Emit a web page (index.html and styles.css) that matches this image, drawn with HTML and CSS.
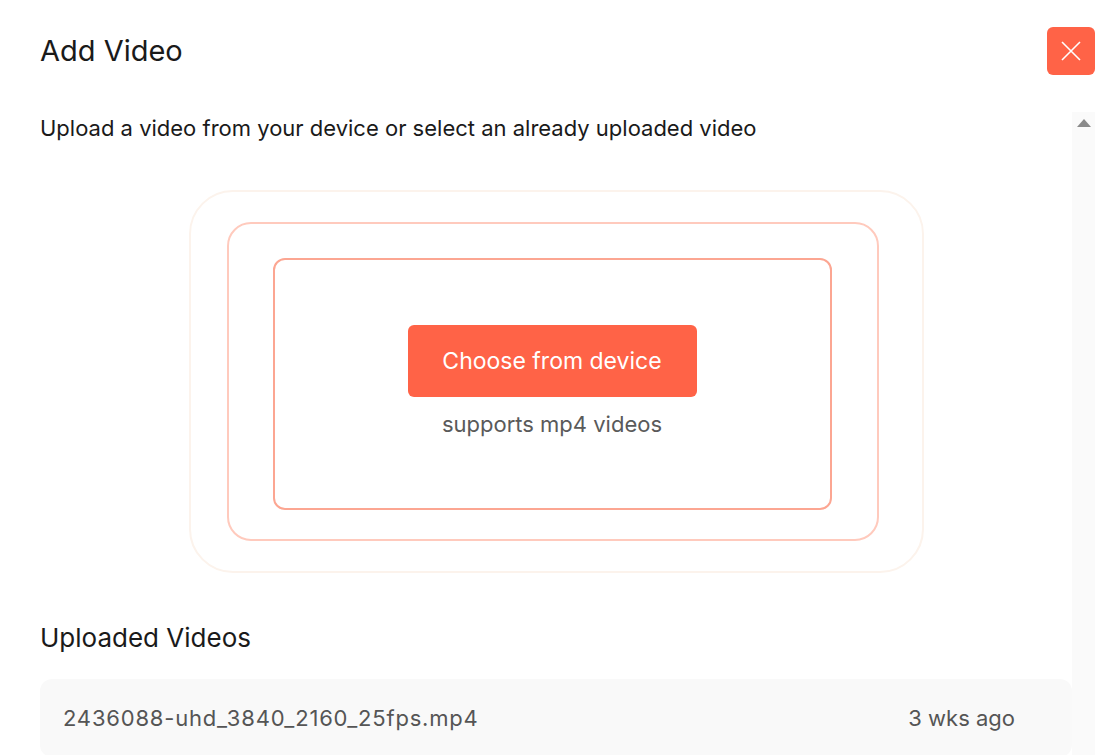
FILE: index.html
```html
<!DOCTYPE html>
<html lang="en">

<head>
    <meta charset="UTF-8">
    <title>Add Video</title>
    <link rel="stylesheet" href="styles.css">
</head>

<body>
    <div class="modal">
        <!-- header -->
        <div class="modal-head">
            <h1 class="modal-title">Add Video</h1>
            <button class="close-btn" aria-label="Close">
                <svg width="22" height="22" viewBox="0 0 22 22">
                    <path d="M2 2 L20 20 M20 2 L2 20" stroke="#fff" stroke-width="1.6" fill="none"/>
                </svg>
            </button>
        </div>

        <!-- body -->
        <div class="modal-body">
            <div class="content">
                <p class="lead">Upload a video from your device or select an already uploaded video</p>

                <div class="drop-outer">
                    <div class="drop-middle">
                        <div class="drop-inner">
                            <button class="choose-btn">Choose from device</button>
                            <span class="hint">supports mp4 videos</span>
                        </div>
                    </div>
                </div>

                <h2 class="section-title">Uploaded Videos</h2>
                <ul class="video-list">
                    <li class="video-item">
                        <span class="video-name">2436088-uhd_3840_2160_25fps.mp4</span>
                        <span class="video-date">3 wks ago</span>
                    </li>
                </ul>
            </div>
            <!-- scrollbar -->
            <div class="scrollbar">
                <span class="scroll-up"></span>
            </div>
        </div>
    </div>
</body>

</html>
```

FILE: styles.css
```css
* {
    margin: 0;
    padding: 0;
    box-sizing: border-box;
    list-style: none;
}

body {
    background-color: #fff;
    font-family: "Inter", "Noto Sans", sans-serif;
    color: #1a1a1a;
    height: 755px;
    overflow: hidden;
}

.modal {
    display: flex;
    flex-direction: column;
    height: 755px;
}

.modal-head {
    display: flex;
    justify-content: space-between;
    align-items: flex-start;
    padding: 27px 24px 0 40px;
    height: 112px;
}

.modal-title {
    font-size: 29px;
    font-weight: 400;
    line-height: 32px;
    margin-top: 8px;
    color: #1a1a1a;
}

.close-btn {
    width: 48px;
    height: 48px;
    border: none;
    border-radius: 6px;
    background-color: #ff6347;
    display: flex;
    align-items: center;
    justify-content: center;
    cursor: pointer;
}

.modal-body {
    flex: 1;
    display: flex;
    padding-right: 24px;
    overflow: hidden;
}

.content {
    flex: 1;
    padding-left: 40px;
}

.lead {
    font-size: 22px;
    line-height: 32px;
    color: #1a1a1a;
}

.drop-outer {
    width: 735px;
    margin: 46px auto 0;
    border: 2px solid #fcf3ec;
    border-radius: 44px;
    padding: 30px 43px 30px 36px;
}

.drop-middle {
    border: 2px solid #ffcabd;
    border-radius: 24px;
    padding: 34px 45px 29px 44px;
}

.drop-inner {
    border: 2px solid #fca692;
    border-radius: 12px;
    height: 252px;
    display: flex;
    flex-direction: column;
    align-items: center;
    padding-top: 65px;
}

.choose-btn {
    width: 289px;
    height: 72px;
    border: none;
    border-radius: 6px;
    background-color: #ff6347;
    color: #fff;
    font-family: inherit;
    font-size: 23px;
    cursor: pointer;
}

.hint {
    margin-top: 12px;
    font-size: 22px;
    line-height: 30px;
    color: #5a5a5a;
}

.section-title {
    font-size: 26px;
    font-weight: 400;
    line-height: 30px;
    margin-top: 50px;
    color: #1a1a1a;
}

.video-list {
    margin-top: 26px;
}

.video-item {
    display: flex;
    justify-content: space-between;
    align-items: center;
    height: 78px;
    padding: 0 57px 0 23px;
    background-color: #f9f9f9;
    border-radius: 12px;
    font-size: 22px;
    color: #555;
}

.video-name {
    letter-spacing: 0.8px;
}

.scrollbar {
    width: 23px;
    background-color: #fafafa;
    display: flex;
    justify-content: center;
}

.scroll-up {
    width: 0;
    height: 0;
    margin-top: 7px;
    border-left: 7px solid transparent;
    border-right: 7px solid transparent;
    border-bottom: 8px solid #8a8a8a;
}
```
